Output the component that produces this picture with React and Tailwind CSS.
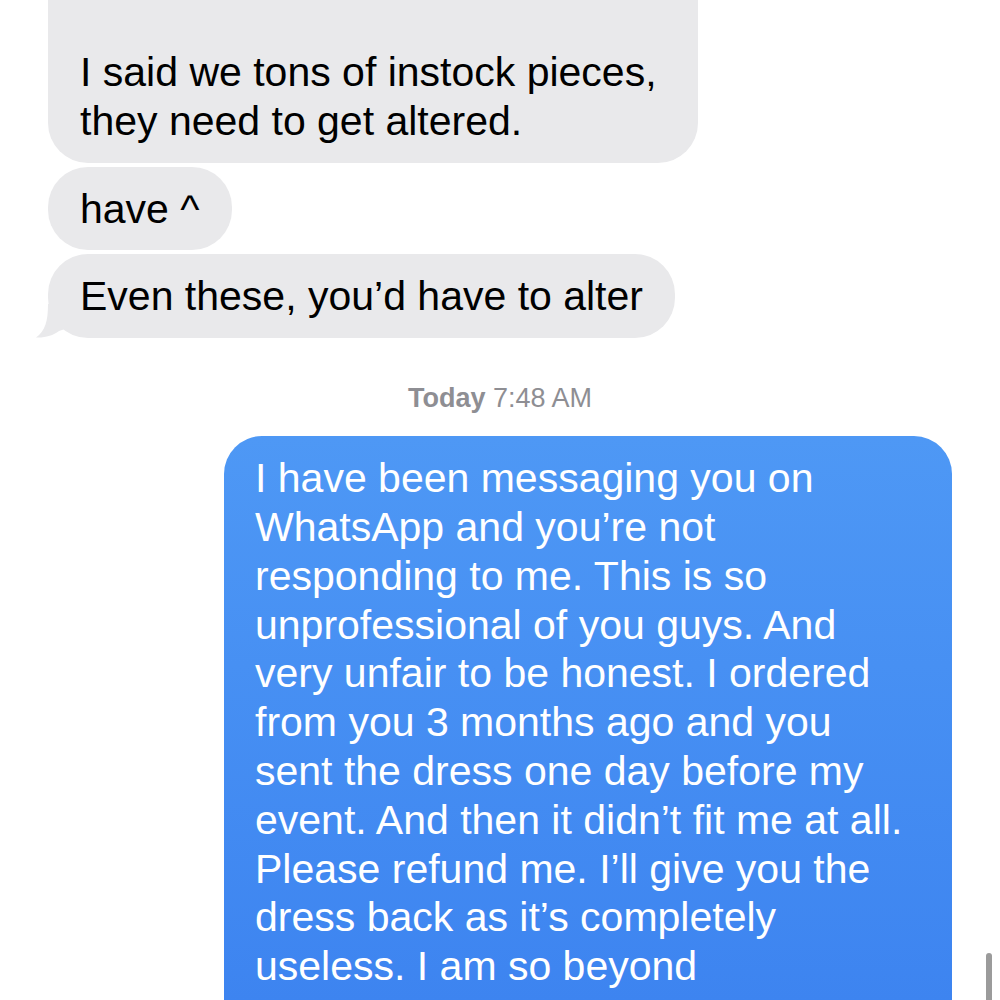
import React from 'react';

const font = { fontFamily: '"Liberation Sans", Arial, sans-serif' };

const incoming = [
  { id: 1, lines: ['I said we tons of instock pieces,', 'they need to get altered.'], first: true },
  { id: 2, lines: ['have ^'] },
  { id: 3, lines: ['Even these, you’d have to alter'], tail: true },
];

const outgoing = [
  'I have been messaging you on',
  'WhatsApp and you’re not',
  'responding to me. This is so',
  'unprofessional of you guys. And',
  'very unfair to be honest. I ordered',
  'from you 3 months ago and you',
  'sent the dress one day before my',
  'event. And then it didn’t fit me at all.',
  'Please refund me. I’ll give you the',
  'dress back as it’s completely',
  'useless. I am so beyond',
];

const Tail = () => (
  <svg
    className="absolute left-[-12px] bottom-0"
    width="32"
    height="34"
    viewBox="0 0 32 34"
  >
    <path d="M12 0 C12 18 9 27 0 33.5 C9 34 17 31.5 23 27 L32 24 L32 0 Z" fill="#e9e9eb" />
  </svg>
);

const Incoming = ({ msg }) => (
  <div
    className={
      'relative self-start bg-[#e9e9eb] text-black rounded-[40px] pl-[32px] pr-[32px] pb-[17px] ' +
      (msg.first ? 'w-[650px] -mt-[40px] pt-[88px]' : 'pt-[18px]')
    }
  >
    {msg.tail && <Tail />}
    {msg.lines.map((line, i) => (
      <div key={i} className="relative text-[41px] leading-[48.8px] whitespace-nowrap">
        {line}
      </div>
    ))}
  </div>
);

export default function App() {
  return (
    <div className="relative h-[1000px] w-[1000px] overflow-hidden bg-white" style={font}>
      <div className="flex flex-col px-[48px]">
        <div className="flex flex-col gap-[4px]">
          {incoming.map((m) => (
            <Incoming key={m.id} msg={m} />
          ))}
        </div>

        {/* timestamp */}
        <div className="mt-[44px] text-center text-[27px] leading-[32px] text-[#8e8e93]">
          <span className="font-bold">Today</span> 7:48 AM
        </div>

        {/* outgoing bubble */}
        <div className="mt-[22px] self-end w-[728px] rounded-[38px] bg-gradient-to-b from-[#4e98f5] to-[#3a80ef] pl-[31px] pr-[20px] pt-[18px] pb-[120px] text-white">
          {outgoing.map((line, i) => (
            <div key={i} className="text-[41px] leading-[48.8px] whitespace-nowrap">
              {line}
            </div>
          ))}
        </div>
      </div>

      {/* scroll indicator */}
      <div className="absolute left-[986px] top-[953px] h-[80px] w-[6px] rounded-full bg-[#9b9b9b]" />
    </div>
  );
}
